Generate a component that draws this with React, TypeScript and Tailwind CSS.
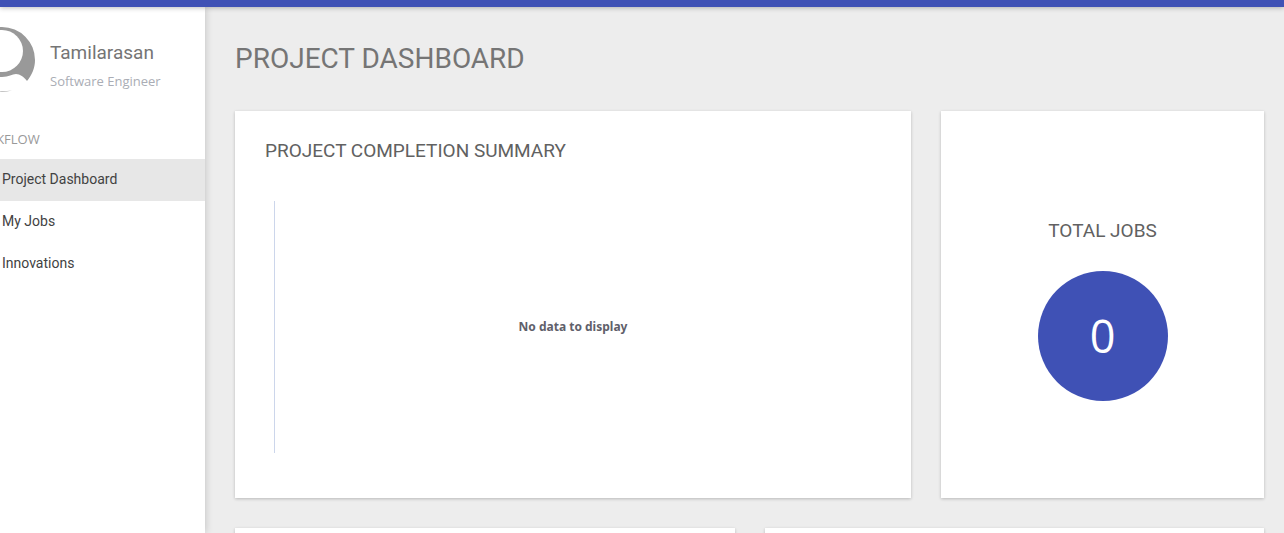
const links = ["Project Dashboard", "My Jobs", "Innovations"];

function Avatar() {
  return (
    <svg viewBox="0 0 66 66" className="size-[66px] shrink-0" aria-hidden="true">
      <path
        fill="#999"
        d="M33 0A33 33 0 0 1 66 33C66 41 63 48 58 54C55 50 51 47 47 47C43 47 40 50 33 50C26 50 23 47 19 47C15 47 11 50 8 54C3 48 0 41 0 33A33 33 0 0 1 33 0Z"
      />
      <circle cx="33" cy="24" r="21" fill="#fff" />
      <path fill="#999" opacity="0.8" d="M23 63.600Q33 64.800 43 63.600Q33 66.200 23 63.600Z" />
    </svg>
  );
}

export default function App() {
  return (
    <div className="flex h-screen flex-col overflow-hidden bg-[#ededed] font-['Roboto',sans-serif]">
      <header className="relative z-20 h-[7px] shrink-0 bg-[#3f51b5] shadow-[0_1px_5px_rgba(0,0,0,0.26)]" />
      <div className="flex min-h-0 flex-1">
        <aside className="relative z-10 -ml-[50px] w-[255px] shrink-0 bg-white shadow-[0_0_8px_rgba(0,0,0,0.2)]">
          <div className="flex gap-[15px] pt-5 pl-[19px]">
            <Avatar />
            <div className="pt-3">
              <p className="text-[19px] leading-7 text-[#757575]">Tamilarasan</p>
              <p className="pt-1 font-['Open_Sans',sans-serif] text-[13px] leading-5 text-[#aaadb5]">
                Software Engineer
              </p>
            </div>
          </div>
          <nav>
            <h2 className="pt-9 pb-[10px] pl-4 font-['Open_Sans',sans-serif] text-[13px] leading-5 text-[#999]">
              WORKFLOW
            </h2>
            {links.map((label, i) => (
              <a
                key={label}
                href="#"
                aria-current={i === 0 ? "page" : undefined}
                className="block pb-[2px] pl-[52px] text-sm leading-10 text-[#424242] aria-[current=page]:bg-[#e7e7e7]"
              >
                {label}
              </a>
            ))}
          </nav>
        </aside>
        <main className="min-w-0 flex-1 pt-[30px] pr-5 pl-[30px]">
          <h1 className="pb-[30px] text-[28px] leading-[44px] text-[#757575]">PROJECT DASHBOARD</h1>
          <div className="grid grid-cols-12 gap-[30px]">
            <section className="col-span-8 bg-white p-[30px] shadow-[0_1px_3px_rgba(0,0,0,0.22)]">
              <h2 className="text-[19px] leading-5 text-[#616161]">PROJECT COMPLETION SUMMARY</h2>
              <div className="mt-10 mb-[15px] ml-[9px] flex h-[252px] items-center justify-center border-l border-[#ccd6eb] pr-[10px]">
                <p className="font-['Noto_Sans',sans-serif] text-xs font-bold text-[#60606a]">No data to display</p>
              </div>
            </section>
            <section className="col-span-4 flex flex-col items-center justify-center gap-[30px] bg-white pt-3 shadow-[0_1px_3px_rgba(0,0,0,0.22)]">
              <h2 className="text-[19px] leading-5 text-[#616161]">TOTAL JOBS</h2>
              <div className="flex size-[130px] items-center justify-center rounded-full bg-[#3f51b5] font-['Open_Sans',sans-serif] text-[45px] text-white">
                0
              </div>
            </section>
            <section className="col-span-6 h-[300px] bg-white shadow-[0_1px_3px_rgba(0,0,0,0.22)]" />
            <section className="col-span-6 h-[300px] bg-white shadow-[0_1px_3px_rgba(0,0,0,0.22)]" />
          </div>
        </main>
      </div>
    </div>
  );
}
